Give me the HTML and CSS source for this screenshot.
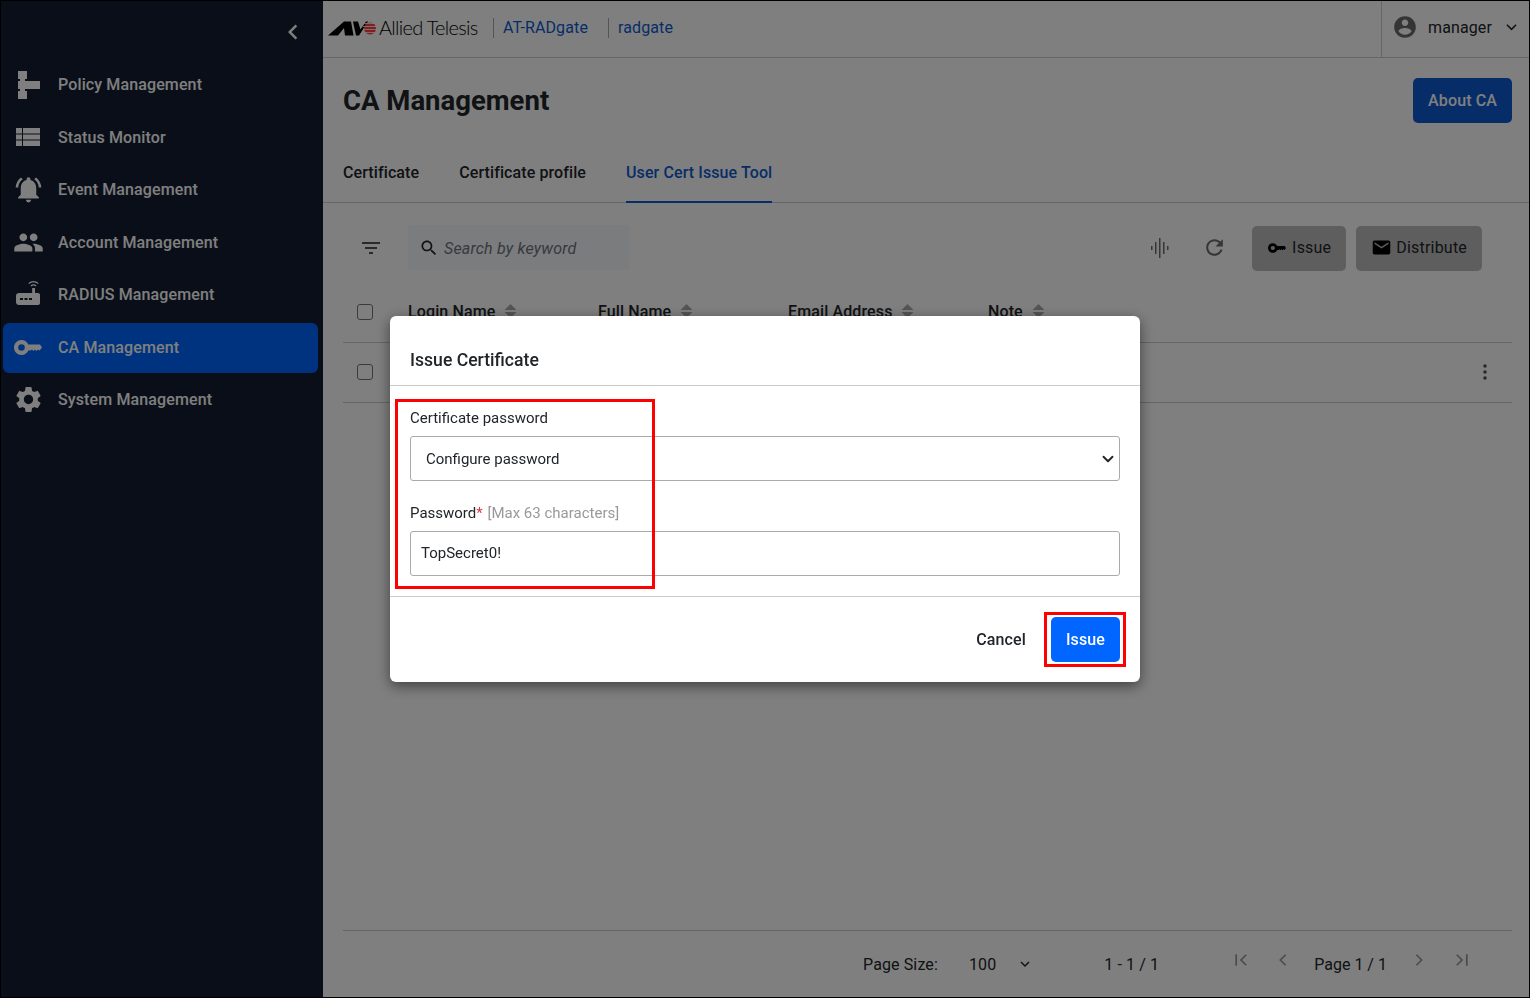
FILE: index.html
```html
<!DOCTYPE html>
<html lang="en">
<head>
    <meta charset="UTF-8">
    <title>CA Management</title>
    <link rel="stylesheet" href="styles.css">
</head>
<body>

<div class="app">
    <!-- Sidebar -->
    <aside class="sidebar">
        <div class="collapse-row">
            <svg class="collapse-icon" viewBox="0 0 24 24"><path d="M15.4 7.4 14 6l-6 6 6 6 1.4-1.4L10.8 12z"/></svg>
        </div>
        <nav class="nav">
            <a class="nav-item">
                <span class="nav-slot"><svg class="icon-policy" viewBox="0 0 22 28"><path d="M0 0h9v8H7v2h15v8H7v2h2v8H0v-8h2v-2H0v-8h2V8H0z"/></svg></span>
                <span class="nav-text">Policy Management</span>
            </a>
            <a class="nav-item">
                <span class="nav-slot"><svg class="icon-status" viewBox="0 0 24 18"><path d="M0 0h6v5.500H0zm7 0h17v5.500H7zM0 6.500h6v5H0zm7 0h17v5H7zM0 12.500h6V18H0zm7 0h17V18H7z"/></svg></span>
                <span class="nav-text">Status Monitor</span>
            </a>
            <a class="nav-item">
                <span class="nav-slot"><svg class="icon-large" viewBox="0 0 24 24"><path d="M7.58 4.08 6.15 2.65C3.75 4.48 2.17 7.3 2.03 10.5h2c.15-2.65 1.51-4.97 3.55-6.42zm12.39 6.42h2c-.15-3.2-1.73-6.02-4.12-7.85l-1.42 1.43c2.02 1.45 3.39 3.77 3.54 6.42zM18 11c0-3.07-1.64-5.64-4.5-6.32V4c0-.83-.67-1.5-1.5-1.5s-1.5.67-1.5 1.5v.68C7.63 5.36 6 7.92 6 11v5l-2 2v1h16v-1l-2-2v-5zm-6 11c.14 0 .27-.01.4-.04.65-.14 1.18-.58 1.44-1.18.1-.24.15-.5.15-.78h-4c.01 1.1.9 2 2.01 2z"/></svg></span>
                <span class="nav-text">Event Management</span>
            </a>
            <a class="nav-item">
                <span class="nav-slot"><svg class="icon-large" viewBox="0 0 24 24"><path d="M16 11c1.66 0 2.99-1.34 2.99-3S17.66 5 16 5c-1.66 0-3 1.34-3 3s1.34 3 3 3zm-8 0c1.66 0 2.99-1.34 2.99-3S9.66 5 8 5C6.34 5 5 6.34 5 8s1.34 3 3 3zm0 2c-2.33 0-7 1.17-7 3.5V19h14v-2.5c0-2.33-4.67-3.5-7-3.5zm8 0c-.29 0-.62.02-.97.05 1.16.84 1.97 1.97 1.97 3.45V19h6v-2.5c0-2.33-4.67-3.5-7-3.5z"/></svg></span>
                <span class="nav-text">Account Management</span>
            </a>
            <a class="nav-item">
                <span class="nav-slot"><svg class="icon-router" viewBox="0 0 24 24"><path d="M21.8 3.1l.9-.9C21 .7 19.3 0 17.5 0s-3.5.7-5.2 2.200l.9.9C14.5 2 16 1.300 17.500 1.300s3 .7 4.300 1.800zm-1.300 1.400c-.9-.8-2-1.300-3-1.300s-2.100.5-3 1.300l.9.9c.6-.6 1.300-.9 2.100-.9s1.500.3 2.100.9zM22 12h-3V7h-2.800v5H3c-1.700 0-3 1.300-3 3v6c0 1.700 1.300 3 3 3h19c1.100 0 2-.9 2-2v-8c0-1.100-.9-2-2-2zM7 19H4v-2h3zm4.500 0h-3v-2h3zm4.500 0h-3v-2h3z"/></svg></span>
                <span class="nav-text">RADIUS Management</span>
            </a>
            <a class="nav-item active">
                <span class="nav-slot"><svg class="icon-key" viewBox="0 0 28 15"><path fill-rule="evenodd" d="M7.500 0c3.100 0 5.700 1.900 6.900 4.500H26l2 3-2.500 3-1.500-1-1.500 1.500L21 9.500l-1.500 1.500-1.500-1.500-1.500 1h-2.100c-1.200 2.700-3.800 4.500-6.900 4.500C3.400 15 0 11.700 0 7.500S3.400 0 7.500 0zm0 4.200a3.300 3.300 0 1 0 0 6.600 3.300 3.300 0 0 0 0-6.600z"/></svg></span>
                <span class="nav-text">CA Management</span>
            </a>
            <a class="nav-item">
                <span class="nav-slot"><svg class="icon-large" viewBox="0 0 24 24"><path d="M19.140 12.940c.04-.3.06-.61.06-.94 0-.32-.02-.64-.07-.94l2.030-1.580c.18-.14.23-.41.12-.61l-1.920-3.320c-.12-.22-.37-.29-.59-.22l-2.390.96c-.5-.38-1.030-.7-1.620-.94l-.36-2.540c-.04-.24-.24-.41-.48-.41h-3.840c-.24 0-.43.17-.47.41l-.36 2.540c-.59.24-1.130.57-1.620.94l-2.390-.96c-.22-.08-.47 0-.59.22L2.740 8.870c-.12.21-.08.47.12.61l2.030 1.580c-.05.3-.09.63-.09.94s.02.64.07.94l-2.030 1.580c-.18.14-.23.41-.12.61l1.920 3.320c.12.22.37.29.59.22l2.390-.96c.5.38 1.030.7 1.620.94l.36 2.540c.05.24.24.41.48.41h3.840c.24 0 .44-.17.47-.41l.36-2.540c.59-.24 1.130-.56 1.620-.94l2.390.96c.22.08.47 0 .59-.22l1.920-3.320c.12-.22.07-.47-.12-.61l-2.010-1.580zM12 15.600c-1.980 0-3.600-1.620-3.600-3.600s1.620-3.600 3.600-3.600 3.600 1.620 3.600 3.600-1.620 3.600-3.600 3.600z"/></svg></span>
                <span class="nav-text">System Management</span>
            </a>
        </nav>
    </aside>

    <main class="main">
        <!-- Top bar -->
        <header class="topbar">
            <div class="brand">
                <svg class="brand-mark" viewBox="0 0 48 15">
                    <path d="M0 14.500 16 .5h7l2.500 14h-8.500l-1-7.500-6 7.500z" fill="#000"/>
                    <path d="M25 .5h5l2.500 8L38 .5h2L31 14.500h-3z" fill="#000"/>
                    <circle cx="42" cy="7.500" r="6" fill="#ff4040"/>
                    <path d="M35 2.500h13M35 5.500h13M35 8.500h13M35 11.500h13" stroke="#fff" stroke-width=".8"/>
                </svg>
                <span class="brand-name">Allied Telesis</span>
            </div>
            <a class="crumb">AT-RADgate</a>
            <a class="crumb">radgate</a>
            <div class="user-menu">
                <svg class="user-icon" viewBox="0 0 24 24"><path d="M12 2C6.480 2 2 6.480 2 12s4.480 10 10 10 10-4.480 10-10S17.520 2 12 2zm0 3c1.660 0 3 1.340 3 3s-1.340 3-3 3-3-1.340-3-3 1.340-3 3-3zm0 14.200c-2.500 0-4.710-1.280-6-3.220.03-1.990 4-3.080 6-3.080 1.990 0 5.970 1.090 6 3.080-1.290 1.940-3.500 3.220-6 3.220z"/></svg>
                <span class="user-name">manager</span>
                <svg class="user-caret" viewBox="0 0 12 8"><path d="M1 1.500l5 5 5-5" fill="none" stroke="currentColor" stroke-width="1.700"/></svg>
            </div>
        </header>

        <!-- Title -->
        <div class="page-head">
            <h1 class="page-title">CA Management</h1>
            <button class="btn btn-primary">About CA</button>
        </div>

        <!-- Tabs -->
        <div class="tabs">
            <a class="tab">Certificate</a>
            <a class="tab">Certificate profile</a>
            <a class="tab active">User Cert Issue Tool</a>
        </div>

        <div class="content">
            <!-- Toolbar -->
            <div class="toolbar">
                <svg class="tool-icon filter-icon" viewBox="0 0 24 24"><path d="M10 18h4v-2h-4v2zM3 6v2h18V6H3zm3 7h12v-2H6v2z"/></svg>
                <div class="search">
                    <svg class="search-icon" viewBox="0 0 24 24"><path d="M15.500 14h-.79l-.28-.27C15.410 12.590 16 11.110 16 9.500 16 5.910 13.090 3 9.500 3S3 5.910 3 9.500 5.910 16 9.500 16c1.610 0 3.090-.59 4.230-1.570l.27.28v.79l5 4.990L20.490 19l-4.990-5zm-6 0C7.010 14 5 11.990 5 9.500S7.010 5 9.500 5 14 7.010 14 9.500 11.990 14 9.500 14z"/></svg>
                    <span>Search by keyword</span>
                </div>
                <svg class="tool-icon wave-icon" viewBox="0 0 20 20"><path d="M1 8h1.500v4H1zm4-4h1.500v12H5zm4-4h1.500v20H9zm4 4h1.500v12H13zm4 4h1.500v4H17z"/></svg>
                <svg class="tool-icon refresh-icon" viewBox="0 0 24 24"><path d="M17.650 6.350C16.200 4.900 14.210 4 12 4c-4.420 0-7.990 3.580-7.990 8s3.570 8 7.990 8c3.730 0 6.840-2.550 7.730-6h-2.080c-.82 2.330-3.040 4-5.650 4-3.310 0-6-2.690-6-6s2.690-6 6-6c1.660 0 3.140.69 4.220 1.780L13 11h7V4l-2.350 2.350z"/></svg>
                <button class="btn btn-muted btn-issue">
                    <svg class="btn-key" viewBox="0 0 28 15"><path fill-rule="evenodd" d="M7.500 0c3.100 0 5.700 1.900 6.900 4.500H26l2 3-2.500 3-1.500-1-1.500 1.500L21 9.500l-1.500 1.500-1.500-1.500-1.500 1h-2.100c-1.200 2.700-3.800 4.500-6.900 4.500C3.400 15 0 11.700 0 7.500S3.400 0 7.500 0zm0 4.200a3.300 3.300 0 1 0 0 6.600 3.300 3.300 0 0 0 0-6.600z"/></svg>
                    Issue
                </button>
                <button class="btn btn-muted btn-distribute">
                    <svg class="btn-mail" viewBox="0 0 24 24"><path d="M20 4H4c-1.100 0-1.990.9-1.990 2L2 18c0 1.100.9 2 2 2h16c1.100 0 2-.9 2-2V6c0-1.100-.9-2-2-2zm0 4l-8 5-8-5V6l8 5 8-5v2z"/></svg>
                    Distribute
                </button>
            </div>

            <!-- Table -->
            <div class="table">
                <div class="table-row table-head">
                    <span class="check"></span>
                    <span class="col col-login">Login Name <svg class="sort" viewBox="0 0 12 16"><path d="M6 0l6 6H0zM0 8h12l-6 6z"/></svg></span>
                    <span class="col col-full">Full Name <svg class="sort" viewBox="0 0 12 16"><path d="M6 0l6 6H0zM0 8h12l-6 6z"/></svg></span>
                    <span class="col col-email">Email Address <svg class="sort" viewBox="0 0 12 16"><path d="M6 0l6 6H0zM0 8h12l-6 6z"/></svg></span>
                    <span class="col">Note <svg class="sort" viewBox="0 0 12 16"><path d="M6 0l6 6H0zM0 8h12l-6 6z"/></svg></span>
                </div>
                <div class="table-row table-body">
                    <span class="check"></span>
                    <svg class="more-icon" viewBox="0 0 4 16"><circle cx="2" cy="2" r="1.800"/><circle cx="2" cy="8" r="1.800"/><circle cx="2" cy="14" r="1.800"/></svg>
                </div>
            </div>

            <!-- Pagination -->
            <div class="pager">
                <span class="pager-label">Page Size:</span>
                <span class="pager-size">100</span>
                <svg class="pager-caret" viewBox="0 0 10 7"><path d="M1 1l4 4 4-4" fill="none" stroke="currentColor" stroke-width="1.500"/></svg>
                <span class="pager-range">1 - 1 / 1</span>
                <svg class="pager-icon pager-first" viewBox="0 0 16 16"><path d="M2.500 1.500v13M14 2 8 8l6 6" fill="none" stroke="currentColor" stroke-width="2"/></svg>
                <svg class="pager-icon pager-prev" viewBox="0 0 16 16"><path d="M11 2 5 8l6 6" fill="none" stroke="currentColor" stroke-width="2"/></svg>
                <span class="pager-page">Page 1 / 1</span>
                <svg class="pager-icon pager-next" viewBox="0 0 16 16"><path d="m5 2 6 6-6 6" fill="none" stroke="currentColor" stroke-width="2"/></svg>
                <svg class="pager-icon pager-last" viewBox="0 0 16 16"><path d="m2 2 6 6-6 6M13.500 1.500v13" fill="none" stroke="currentColor" stroke-width="2"/></svg>
            </div>
        </div>
    </main>
</div>

<!-- Dialog -->
<div class="overlay">
    <div class="modal">
        <div class="modal-head">Issue Certificate</div>
        <div class="modal-body">
            <label class="field-label">Certificate password</label>
            <select class="field-select">
                <option>Configure password</option>
            </select>
            <label class="field-label field-second">Password<span class="req">*</span> <span class="hint">[Max 63 characters]</span></label>
            <input class="field-input" type="text" value="TopSecret0!">
        </div>
        <div class="modal-foot">
            <button class="btn btn-link">Cancel</button>
            <button class="btn btn-submit">Issue</button>
        </div>
        <!-- Red callouts -->
        <div class="callout callout-fields"></div>
        <div class="callout callout-issue"></div>
    </div>
</div>

</body>
</html>
```

FILE: styles.css
```css
* {
    box-sizing: border-box;
}

html, body {
    margin: 0;
    height: 100%;
}

body {
    background-color: #fff;
    color: #212529;
    font-family: Roboto, "Liberation Sans", sans-serif;
    font-size: 16px;
    letter-spacing: 0.12px;
    overflow: hidden;
}

.app {
    display: flex;
    height: 998px;
    border: 1px solid #000;
}

/* Sidebar */
.sidebar {
    flex: 0 0 322px;
    background-color: #131d30;
    color: #fff;
}

.collapse-row {
    display: flex;
    justify-content: flex-end;
    height: 59px;
    padding: 16px 15px 0 0;
}

.collapse-icon {
    width: 30px;
    height: 30px;
    fill: #fff;
}

.nav {
    display: flex;
    flex-direction: column;
    gap: 2.500px;
    padding: 0 5px 0 2px;
}

.nav-item {
    display: flex;
    align-items: center;
    height: 50px;
    padding-bottom: 1px;
    border-radius: 6px;
    font-weight: 500;
    color: #fff;
}

.nav-item.active {
    background-color: #0066ff;
}

.nav-slot {
    display: flex;
    align-items: center;
    justify-content: center;
    flex: 0 0 50px;
}

.nav-slot svg {
    fill: #fff;
}

.nav-text {
    margin-left: 5px;
}

.icon-policy {
    width: 22px;
    height: 28px;
    margin-left: 2px;
}

.icon-status {
    width: 24px;
    height: 18px;
}

.icon-large {
    width: 31px;
    height: 31px;
}

.icon-router {
    width: 24px;
    height: 24px;
    margin-top: -4px;
}

.icon-key {
    width: 28px;
    height: 15px;
}

/* Main column */
.main {
    flex: 1;
    display: flex;
    flex-direction: column;
    min-width: 0;
}

.topbar {
    display: flex;
    align-items: center;
    height: 57px;
    padding-bottom: 2px;
    border-bottom: 1px solid #ccc;
    flex-shrink: 0;
}

.brand {
    display: flex;
    align-items: center;
    gap: 3px;
    width: 170px;
    padding-left: 5px;
}

.brand-mark {
    width: 48px;
    height: 15px;
    flex-shrink: 0;
}

.brand-name {
    margin-top: -2px;
    font-family: Lato, sans-serif;
    font-weight: 300;
    font-size: 20px;
    letter-spacing: -0.700px;
    color: #000;
    white-space: nowrap;
}

.crumb {
    color: #0d5bd1;
    line-height: 20px;
    padding-left: 9px;
    margin-right: 20px;
    border-left: 1px solid #aaa;
}

.user-menu {
    display: flex;
    align-items: center;
    align-self: flex-start;
    height: 56px;
    padding-bottom: 4px;
    width: 148px;
    margin-left: auto;
    padding-left: 10px;
    border-left: 1px solid #ccc;
}

.user-icon {
    width: 26px;
    height: 26px;
    fill: #6b6b6b;
}

.user-name {
    margin-left: 10px;
}

.user-caret {
    width: 11px;
    height: 8px;
    margin-left: 14px;
    color: #212529;
}

.page-head {
    display: flex;
    align-items: center;
    justify-content: space-between;
    height: 85px;
    padding: 0 17px 0 20px;
    flex-shrink: 0;
}

.page-title {
    margin: 0;
    font-size: 27.5px;
    font-weight: 700;
    letter-spacing: 0;
    color: #212529;
}

.btn {
    display: inline-flex;
    align-items: center;
    height: 45px;
    padding: 0 15px;
    border: 0;
    border-radius: 5px;
    font-family: inherit;
    font-size: 16px;
    font-weight: 500;
    letter-spacing: inherit;
}

.btn-primary {
    background-color: #0d5bd1;
    color: #fff;
}

.tabs {
    display: flex;
    gap: 40px;
    height: 60px;
    padding-left: 20px;
    border-bottom: 1px solid #ccc;
    letter-spacing: 0.1px;
    flex-shrink: 0;
}

.tab {
    display: flex;
    align-items: center;
    margin-bottom: -1px;
    padding-bottom: 1px;
    font-weight: 500;
    color: #212529;
}

.tab.active {
    padding-top: 2px;
    color: #0d5bd1;
    border-bottom: 2px solid #0d5bd1;
}

.content {
    flex: 1;
    display: flex;
    flex-direction: column;
    padding: 0 17px 0 20px;
    min-height: 0;
}

.toolbar {
    display: flex;
    align-items: center;
    height: 45px;
    margin-top: 22px;
    flex-shrink: 0;
}

.tool-icon {
    fill: #6c6c6c;
    flex-shrink: 0;
}

.filter-icon {
    width: 24px;
    height: 24px;
    margin-left: 16px;
    fill: #555;
}

.search {
    display: flex;
    align-items: center;
    width: 222px;
    height: 45px;
    margin-left: 25px;
    padding: 1px 0 0 11px;
    background-color: #f6f8fa;
    font-style: italic;
    letter-spacing: 0.2px;
    color: #6c757d;
    border-radius: 3px;
}

.search-icon {
    width: 20px;
    height: 20px;
    margin-right: 5px;
    fill: #212529;
}

.wave-icon {
    width: 20px;
    height: 20px;
    margin-left: auto;
}

.refresh-icon {
    width: 25px;
    height: 25px;
    margin-left: 32px;
}

.btn-muted {
    gap: 6px;
    background-color: #bdbdbd;
    color: #212529;
    font-weight: 400;
    margin-top: 2px;
    padding-bottom: 2px;
    letter-spacing: 0.2px;
}

.btn-issue {
    margin-left: 25px;
    padding-left: 16px;
}

.btn-distribute {
    gap: 4px;
    margin-left: 10px;
    margin-right: 30px;
}

.btn-key {
    width: 18px;
    height: 10px;
    fill: #000;
}

.btn-mail {
    width: 21px;
    height: 21px;
    fill: #000;
}

/* Table */
.table {
    margin-top: 13px;
    flex-shrink: 0;
}

.table-row {
    display: flex;
    align-items: center;
    border-bottom: 1px solid #ccc;
}

.table-head {
    height: 60px;
    padding-bottom: 2px;
}

.table-body {
    height: 60px;
    padding-bottom: 1px;
    justify-content: space-between;
}

.check {
    width: 16px;
    height: 16px;
    margin-left: 14px;
    border: 1px solid #777;
    border-radius: 3px;
    background-color: #fff;
    flex-shrink: 0;
}

.col {
    display: inline-flex;
    align-items: center;
    gap: 9px;
    font-weight: 500;
    color: #212529;
    white-space: nowrap;
}

.col-login {
    margin-left: 35px;
    width: 190px;
}

.col-full {
    width: 190px;
}

.col-email {
    width: 200px;
}

.sort {
    width: 13px;
    height: 16px;
    fill: #aaa;
}

.more-icon {
    width: 4px;
    height: 16px;
    margin-right: 25px;
    fill: #555;
}

/* Pagination */
.pager {
    display: flex;
    align-items: center;
    margin-top: auto;
    height: 67px;
    border-top: 1px solid #ccc;
    padding-left: 520px;
    color: #212529;
}

.pager-size {
    margin-left: 31px;
}

.pager-caret {
    width: 10px;
    height: 7px;
    margin-left: 24px;
}

.pager-range {
    margin-left: 74px;
}

.pager-icon {
    width: 14px;
    height: 14px;
    color: #999;
    margin-top: -8px;
}

.pager-first {
    margin-left: 75px;
}

.pager-prev {
    margin-left: 28px;
}

.pager-page {
    margin-left: 24px;
    letter-spacing: 0;
}

.pager-next {
    margin-left: 25px;
}

.pager-last {
    margin-left: 29px;
}

/* Dialog */
.overlay {
    position: fixed;
    inset: 0;
    display: flex;
    align-items: center;
    justify-content: center;
    background-color: rgba(0, 0, 0, 0.5);
}

.modal {
    position: relative;
    width: 750px;
    background-color: #fff;
    border-radius: 6px;
    box-shadow: 0 4px 14px rgba(0, 0, 0, 0.5);
}

.modal-head {
    display: flex;
    align-items: flex-end;
    height: 70px;
    padding: 0 20px 15px;
    border-bottom: 1px solid #ccc;
    font-size: 17.6px;
    font-weight: 500;
    letter-spacing: 0;
    color: #212529;
}

.modal-body {
    display: flex;
    flex-direction: column;
    padding: 22px 20px 20px;
    letter-spacing: 0;
}

.field-label {
    height: 20px;
    line-height: 20px;
    margin-bottom: 8px;
    font-size: 15px;
    color: #212529;
}

.field-second {
    margin-top: 22px;
}

.req {
    color: #dc3545;
}

.hint {
    margin-left: 1px;
    color: #999;
}

.field-select,
.field-input {
    width: 100%;
    height: 45px;
    border: 1px solid #aaa;
    border-radius: 3px;
    background-color: #fff;
    font-family: inherit;
    font-size: 15px;
    color: #212529;
}

.field-select {
    appearance: none;
    padding: 0 36px 0 15px;
    background-image: url("data:image/svg+xml,%3csvg xmlns='http://www.w3.org/2000/svg' viewBox='0 0 16 16'%3e%3cpath fill='none' stroke='%23212529' stroke-linecap='round' stroke-linejoin='round' stroke-width='2.500' d='m2 5 6 6 6-6'/%3e%3c/svg%3e");
    background-repeat: no-repeat;
    background-position: right 5px center;
    background-size: 12px 12px;
}

.field-input {
    padding: 0 10px 2px;
}

.modal-foot {
    display: flex;
    justify-content: flex-end;
    align-items: center;
    gap: 10px;
    padding: 20px;
    border-top: 1px solid #ccc;
}

.btn-link {
    background: none;
    color: #212529;
}

.btn-submit {
    background-color: #0066ff;
    color: #fff;
}

.callout {
    position: absolute;
    border: 3px solid #f00;
}

.callout-fields {
    left: 5px;
    top: 83px;
    width: 260px;
    height: 190px;
}

.callout-issue {
    left: 654px;
    top: 296px;
    width: 82px;
    height: 55px;
}
```
